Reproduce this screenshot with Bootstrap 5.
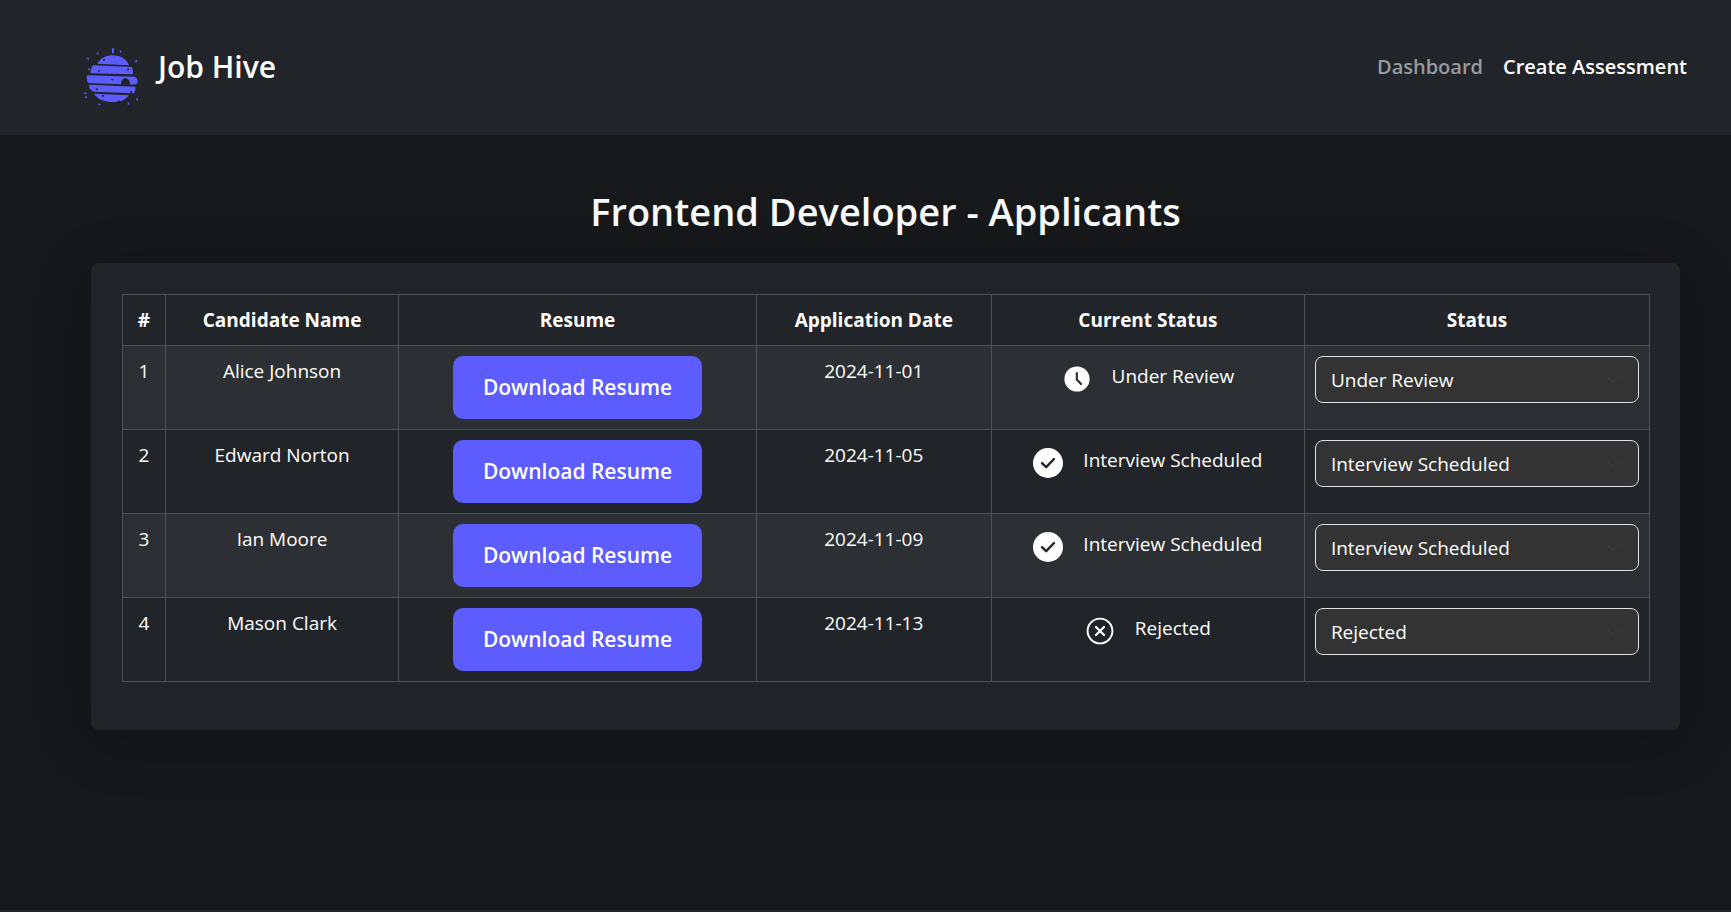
<!DOCTYPE html>
<html lang="en">
<head>
<meta charset="utf-8">
<meta name="viewport" content="width=device-width, initial-scale=1">
<title>Job Hive - Applicants</title>
<link href="https://cdn.jsdelivr.net/npm/bootstrap@5.3.0/dist/css/bootstrap.min.css" rel="stylesheet">
<style>
  :root { --hive: #5c5cff; --panel: #212529; }
  body { background: #17181a; color: #f8f9fa; font-family: "Open Sans", "Noto Sans", sans-serif; font-size: 19px; line-height: 30px; }
  .site-header { background: var(--panel); padding: 47px 44px 28px 83px; line-height: 40px; }
  .brand-link { gap: 18px; }
  .brand-name { font-size: 30px; font-weight: 600; color: #fff; }
  .site-nav { gap: 20px; }
  .site-link { font-size: 20px; font-weight: 600; color: #fff; text-decoration: none; }
  .site-link.is-current { color: #999b9d; }
  .page-main { padding: 48px 51px 48px 91px; }
  .page-title { font-size: 38px; font-weight: 600; line-height: 56px; margin-bottom: 24px; }
  .panel-card { background: var(--panel); border-radius: 8px; padding: 31px 30px 48px 31px; box-shadow: 0 10px 60px rgba(0, 0, 0, .2); }
  .applicants { table-layout: fixed; --bs-table-bg: #212529; border-color: #4d5154; margin: 0; }
  .applicants > :not(caption) > * > * { padding: 10px; }
  .c-num { width: 2.8%; } .c-name { width: 15.3%; } .c-resume { width: 23.4%; }
  .c-date { width: 15.4%; } .c-current { width: 20.5%; }
  .btn-hive { background: var(--hive); color: #fff; font-size: 21px; font-weight: 600; line-height: 31px; padding: 16px 30px; border: 0; border-radius: 10px; }
  .btn-hive:hover { background: #4b4be6; color: #fff; }
  .current-status { gap: 20px; padding-top: 5px; }
  .current-status svg { width: 30px; height: 30px; margin-top: 3px; flex: none; }
  .status-select { background-color: #333; color: #fff; border: 1px solid #dee2e6; border-radius: 8px; font-size: 19px; line-height: 30px; padding: 8px 45px 7px 15px; background-position: right 15px center; background-size: 20px 15px; }
  .site-footer { background: var(--panel); height: 2px; }
</style>
</head>
<body class="d-flex flex-column min-vh-100">
<svg class="d-none" aria-hidden="true">
  <symbol id="icon-clock" viewBox="0 0 30 30">
    <circle cx="15" cy="15" r="12.6" fill="#fff"/>
    <path d="M14.8 9.2v6.3l4.2 4.4" fill="none" stroke="#2c3034" stroke-width="2.2" stroke-linecap="round"/>
  </symbol>
  <symbol id="icon-check" viewBox="0 0 30 30">
    <circle cx="15" cy="15" r="15" fill="#fff"/>
    <path d="M9 15.2l4.2 4L21 11" fill="none" stroke="#212529" stroke-width="2.4" stroke-linecap="round" stroke-linejoin="round"/>
  </symbol>
  <symbol id="icon-reject" viewBox="0 0 30 30">
    <circle cx="15" cy="15" r="12.4" fill="none" stroke="#fff" stroke-width="1.9"/>
    <path d="M11 11l8 8M19 11l-8 8" fill="none" stroke="#fff" stroke-width="2.2" stroke-linecap="round"/>
  </symbol>
</svg>

<header class="site-header d-flex justify-content-between align-items-start">
  <a href="#" class="brand-link d-flex align-items-start text-decoration-none">
    <svg width="57" height="60" viewBox="9 14 171 180" fill="#5c5cff" aria-hidden="true">
      <path d="M96 18h6v15h-6zM119 24l5 1 1 5-5 1zM50 31l5-1 1 6-5 1zM21 45l5 1 1 6-5-1zM166 54l5-1 0 6-5 2zM24 79l5-1 1 5-5 1zM12 151l7-1 0 5-6 1zM15 163l6-2 0 6-5 1zM54 184l6 0 2 5-6 0zM142 181l5-2 1 7-5 1zM169 168l5 1 0 6-5-1z"/>
      <path d="M52 64C62 46 80 39 99 39c22 0 41 11 48 30z"/>
      <path d="M39 69l116 5c3 6 5 13 4 22L32 93c-1-9 2-18 7-24z"/>
      <path d="M22 99l143 4c6 3 8 9 8 14 0 5-2 9-6 9l-17 1c1-25-27-25-27-1l-98-4c-6-6-6-17-3-23z"/>
      <path d="M27 127l139 6c1 8-1 15-5 20L42 148c-10-4-16-12-15-21z"/>
      <path d="M42 154l105 5c-10 13-24 20-44 20-28 0-50-7-61-25z"/>
      <path fill="#212529" d="M69 51l6-2 0 5-5 1zM54 84l6-1 0 4-6 1zM141 80l6-2 1 5-6 2zM93 110l7 0 1 4-6 0zM47 139l6-1 1 5-6 1zM66 158l6 0 0 5-5 1zM150 146l6 0 0 6-5 0zM112 176l8-2 0 5-8 1z"/>
    </svg>
    <span class="brand-name">Job Hive</span>
  </a>
  <nav class="site-nav d-flex">
    <a class="site-link is-current" href="#">Dashboard</a>
    <a class="site-link" href="#">Create Assessment</a>
  </nav>
</header>

<main class="page-main flex-grow-1">
  <h1 class="page-title text-center">Frontend Developer - Applicants</h1>
  <section class="panel-card">
    <table class="table table-dark table-striped table-bordered text-center applicants">
      <colgroup><col class="c-num"><col class="c-name"><col class="c-resume"><col class="c-date"><col class="c-current"><col></colgroup>
      <thead>
        <tr><th scope="col">#</th><th scope="col">Candidate Name</th><th scope="col">Resume</th><th scope="col">Application Date</th><th scope="col">Current Status</th><th scope="col">Status</th></tr>
      </thead>
      <tbody>
        <tr>
          <td>1</td><td>Alice Johnson</td>
          <td><button type="button" class="btn btn-hive">Download Resume</button></td>
          <td>2024-11-01</td>
          <td><div class="current-status d-flex justify-content-center"><svg aria-hidden="true"><use href="#icon-clock"/></svg><span>Under Review</span></div></td>
          <td><select class="form-select status-select" aria-label="Status of Alice Johnson"><option selected>Under Review</option><option>Interview Scheduled</option><option>Rejected</option></select></td>
        </tr>
        <tr>
          <td>2</td><td>Edward Norton</td>
          <td><button type="button" class="btn btn-hive">Download Resume</button></td>
          <td>2024-11-05</td>
          <td><div class="current-status d-flex justify-content-center"><svg aria-hidden="true"><use href="#icon-check"/></svg><span>Interview Scheduled</span></div></td>
          <td><select class="form-select status-select" aria-label="Status of Edward Norton"><option>Under Review</option><option selected>Interview Scheduled</option><option>Rejected</option></select></td>
        </tr>
        <tr>
          <td>3</td><td>Ian Moore</td>
          <td><button type="button" class="btn btn-hive">Download Resume</button></td>
          <td>2024-11-09</td>
          <td><div class="current-status d-flex justify-content-center"><svg aria-hidden="true"><use href="#icon-check"/></svg><span>Interview Scheduled</span></div></td>
          <td><select class="form-select status-select" aria-label="Status of Ian Moore"><option>Under Review</option><option selected>Interview Scheduled</option><option>Rejected</option></select></td>
        </tr>
        <tr>
          <td>4</td><td>Mason Clark</td>
          <td><button type="button" class="btn btn-hive">Download Resume</button></td>
          <td>2024-11-13</td>
          <td><div class="current-status d-flex justify-content-center"><svg aria-hidden="true"><use href="#icon-reject"/></svg><span>Rejected</span></div></td>
          <td><select class="form-select status-select" aria-label="Status of Mason Clark"><option>Under Review</option><option>Interview Scheduled</option><option selected>Rejected</option></select></td>
        </tr>
      </tbody>
    </table>
  </section>
</main>
<footer class="site-footer"></footer>
<script src="https://cdn.jsdelivr.net/npm/bootstrap@5.3.0/dist/js/bootstrap.bundle.min.js"></script>
</body>
</html>
